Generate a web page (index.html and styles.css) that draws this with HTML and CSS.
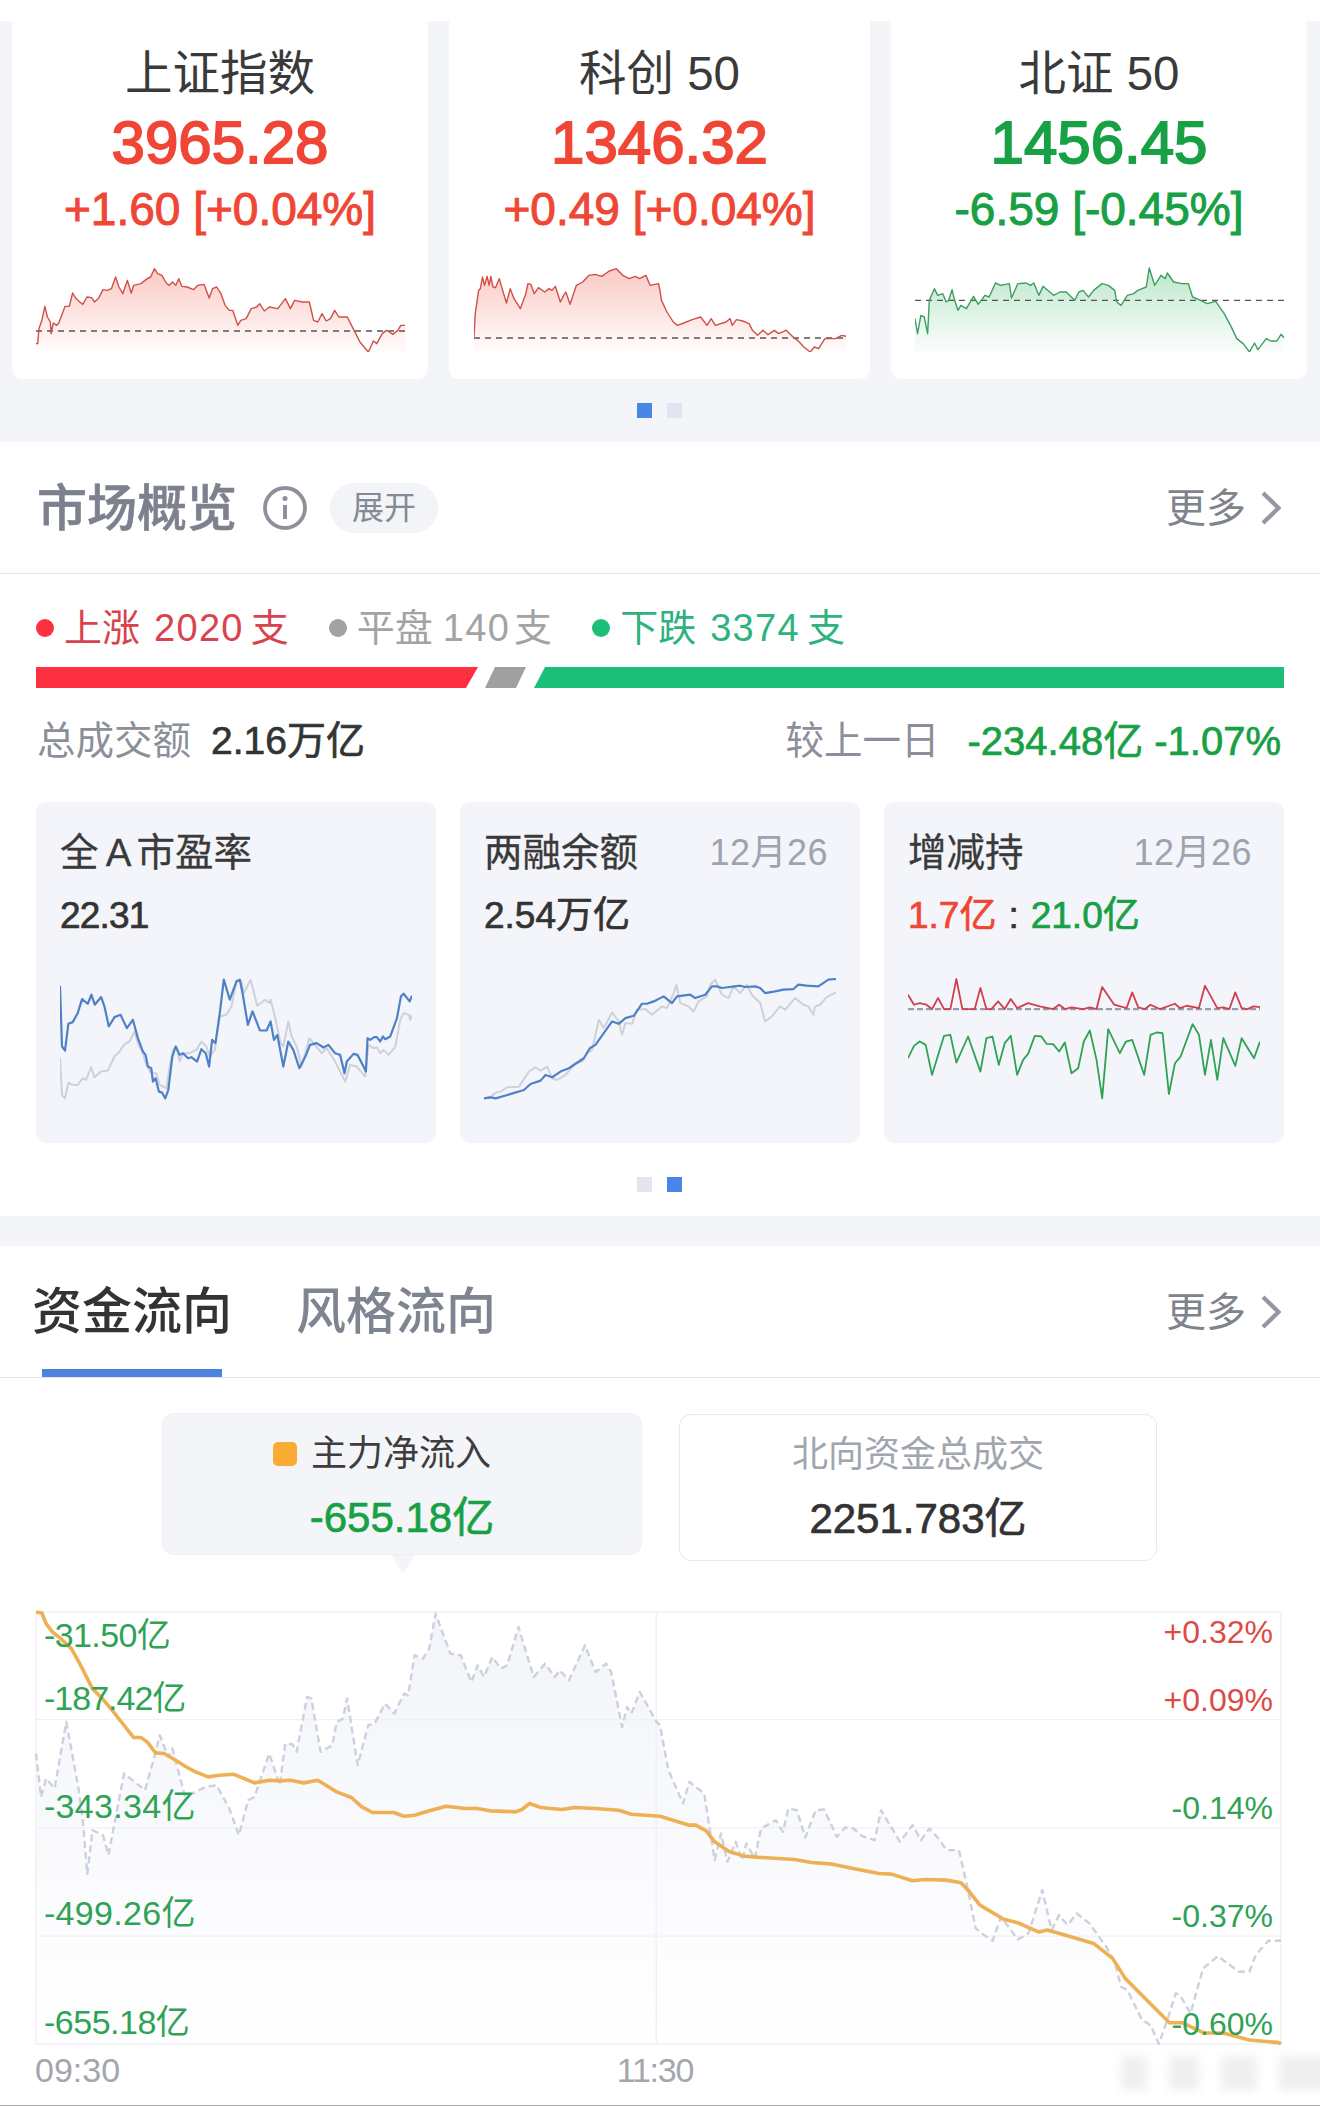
FILE: index.html
```html
<!DOCTYPE html>
<html lang="zh-CN">
<head>
<meta charset="utf-8">
<title>市场概览</title>
<link rel="stylesheet" href="styles.css">
</head>
<body>
<div class="page">
  <div class="top-strip"></div>
  <section class="indices">
    <div class="index-row">
      <article class="index-card narrow">
        <h3 class="index-name">上证指数</h3>
        <div class="index-price up">3965.28</div>
        <div class="index-change up">+1.60 [+0.04%]</div>
        <svg class="spark spark-narrow" viewBox="86 800 876 255" preserveAspectRatio="none">
          <defs>
            <linearGradient id="gr" x1="0" y1="0" x2="0" y2="1"><stop offset="0" stop-color="#f8a9a0" stop-opacity=".62"/><stop offset="1" stop-color="#f8a9a0" stop-opacity=".03"/></linearGradient>
            <linearGradient id="gg" x1="0" y1="0" x2="0" y2="1"><stop offset="0" stop-color="#7ccf97" stop-opacity=".5"/><stop offset="1" stop-color="#7ccf97" stop-opacity=".03"/></linearGradient>
            <linearGradient id="gb" x1="0" y1="0" x2="0" y2="1"><stop offset="0" stop-color="#eef0f7" stop-opacity=".7"/><stop offset="1" stop-color="#eef0f7" stop-opacity=".02"/></linearGradient>
          </defs>
          <polygon class="fill-red" points="86,1055 86,1030 90,1030 93,985 100,960 107,918 113,950 120,965 122,1000 127,968 135,975 140,968 150,935 155,918 165,918 173,878 180,893 190,905 197,912 207,890 218,892 225,905 235,893 245,868 255,870 265,865 275,830 283,860 292,880 303,840 312,878 318,855 335,850 350,835 358,830 367,805 375,820 385,825 395,848 402,855 410,845 418,855 425,835 432,858 445,860 460,868 470,855 485,852 497,893 505,865 515,860 525,880 535,915 545,930 553,930 565,975 572,960 585,955 597,925 610,920 617,910 628,932 640,920 660,925 678,895 690,925 700,900 718,905 735,905 745,960 755,965 765,940 775,962 785,955 795,930 805,950 825,950 835,975 845,1000 855,1025 875,1055 887,1022 895,1030 908,1000 918,990 925,995 933,1002 945,990 952,975 962,975 962,1055"/>
          <line class="base" x1="86" y1="992" x2="962" y2="992"/>
          <polyline class="line-red" points="86,1030 90,1030 93,985 100,960 107,918 113,950 120,965 122,1000 127,968 135,975 140,968 150,935 155,918 165,918 173,878 180,893 190,905 197,912 207,890 218,892 225,905 235,893 245,868 255,870 265,865 275,830 283,860 292,880 303,840 312,878 318,855 335,850 350,835 358,830 367,805 375,820 385,825 395,848 402,855 410,845 418,855 425,835 432,858 445,860 460,868 470,855 485,852 497,893 505,865 515,860 525,880 535,915 545,930 553,930 565,975 572,960 585,955 597,925 610,920 617,910 628,932 640,920 660,925 678,895 690,925 700,900 718,905 735,905 745,960 755,965 765,940 775,962 785,955 795,930 805,950 825,950 835,975 845,1000 855,1025 875,1055 887,1022 895,1030 908,1000 918,990 925,995 933,1002 945,990 952,975 962,975"/>
        </svg>
      </article>
      <article class="index-card wide">
        <h3 class="index-name">科创 50</h3>
        <div class="index-price up">1346.32</div>
        <div class="index-change up">+0.49 [+0.04%]</div>
        <svg class="spark spark-wide" viewBox="1127 800 883 255" preserveAspectRatio="none">
          <polygon class="fill-red" points="1127,1055 1127,1010 1130,940 1138,870 1142,865 1147,830 1152,855 1158,828 1163,855 1167,828 1172,860 1178,862 1187,835 1195,870 1204,908 1213,865 1222,895 1237,925 1250,880 1255,850 1262,852 1270,880 1280,862 1295,875 1305,865 1312,870 1320,858 1332,905 1340,885 1345,875 1355,912 1370,855 1385,845 1400,825 1415,822 1430,828 1448,812 1465,805 1480,825 1495,835 1510,828 1520,835 1535,825 1545,855 1565,850 1568,868 1572,900 1585,935 1600,965 1610,975 1625,968 1645,958 1665,950 1680,975 1690,955 1700,975 1725,965 1735,955 1740,975 1750,958 1765,962 1780,970 1788,990 1800,1005 1813,990 1825,1003 1840,990 1850,1000 1868,990 1880,1005 1895,1020 1910,1040 1925,1055 1935,1040 1945,1045 1960,1015 1975,1015 1985,1015 2000,1005 2010,1008 2010,1055"/>
          <line class="base" x1="1127" y1="1013" x2="2010" y2="1013"/>
          <polyline class="line-red" points="1127,1010 1130,940 1138,870 1142,865 1147,830 1152,855 1158,828 1163,855 1167,828 1172,860 1178,862 1187,835 1195,870 1204,908 1213,865 1222,895 1237,925 1250,880 1255,850 1262,852 1270,880 1280,862 1295,875 1305,865 1312,870 1320,858 1332,905 1340,885 1345,875 1355,912 1370,855 1385,845 1400,825 1415,822 1430,828 1448,812 1465,805 1480,825 1495,835 1510,828 1520,835 1535,825 1545,855 1565,850 1568,868 1572,900 1585,935 1600,965 1610,975 1625,968 1645,958 1665,950 1680,975 1690,955 1700,975 1725,965 1735,955 1740,975 1750,958 1765,962 1780,970 1788,990 1800,1005 1813,990 1825,1003 1840,990 1850,1000 1868,990 1880,1005 1895,1020 1910,1040 1925,1055 1935,1040 1945,1045 1960,1015 1975,1015 1985,1015 2000,1005 2010,1008"/>
        </svg>
      </article>
      <article class="index-card narrow">
        <h3 class="index-name">北证 50</h3>
        <div class="index-price down">1456.45</div>
        <div class="index-change down">-6.59 [-0.45%]</div>
        <svg class="spark spark-narrow" viewBox="606 800 876 255" preserveAspectRatio="none">
          <polygon class="fill-green" points="606,1055 606,955 612,1000 620,945 628,950 636,1000 640,900 652,865 660,885 672,880 680,905 686,900 694,868 700,900 708,930 715,915 728,925 745,888 756,912 772,885 782,890 797,848 810,855 830,850 835,893 850,850 870,848 880,855 888,848 900,885 910,858 935,885 950,875 965,875 985,900 995,875 1005,870 1018,890 1030,870 1050,850 1065,855 1080,870 1085,905 1095,915 1110,885 1125,880 1135,870 1155,860 1162,803 1175,855 1190,825 1200,835 1205,818 1220,845 1240,850 1255,850 1265,890 1275,895 1300,910 1320,903 1340,940 1355,975 1370,1015 1385,1030 1400,1055 1412,1028 1420,1048 1440,1015 1450,1022 1465,1022 1475,1002 1482,1012 1482,1055"/>
          <line class="base" x1="606" y1="900" x2="1482" y2="900"/>
          <polyline class="line-green" points="606,955 612,1000 620,945 628,950 636,1000 640,900 652,865 660,885 672,880 680,905 686,900 694,868 700,900 708,930 715,915 728,925 745,888 756,912 772,885 782,890 797,848 810,855 830,850 835,893 850,850 870,848 880,855 888,848 900,885 910,858 935,885 950,875 965,875 985,900 995,875 1005,870 1018,890 1030,870 1050,850 1065,855 1080,870 1085,905 1095,915 1110,885 1125,880 1135,870 1155,860 1162,803 1175,855 1190,825 1200,835 1205,818 1220,845 1240,850 1255,850 1265,890 1275,895 1300,910 1320,903 1340,940 1355,975 1370,1015 1385,1030 1400,1055 1412,1028 1420,1048 1440,1015 1450,1022 1465,1022 1475,1002 1482,1012"/>
        </svg>
      </article>
    </div>
    <div class="pager pager-top"><span class="pager-dot active"></span><span class="pager-dot"></span></div>
  </section>

  <section class="overview">
    <header class="section-head">
      <h2 class="section-title">市场概览</h2>
      <svg class="info-icon" viewBox="0 0 44 44"><circle cx="22" cy="22" r="20" fill="none" stroke="#8d919c" stroke-width="3.8"/><circle cx="22" cy="12.5" r="2.5" fill="#8d919c"/><line x1="22" y1="19" x2="22" y2="33" stroke="#8d919c" stroke-width="4"/></svg>
      <span class="pill">展开</span>
      <a class="more"><span>更多</span><svg class="chevron" viewBox="0 0 20 34"><polyline points="2,2 17.5,17 2,32" fill="none" stroke="#94979f" stroke-width="4.2"/></svg></a>
    </header>
    <div class="legend">
      <span class="legend-item up-soft"><i class="dot dot-up"></i>上涨<span class="num">2020</span>支</span>
      <span class="legend-item flat-soft"><i class="dot dot-flat"></i>平盘<span class="num">140</span>支</span>
      <span class="legend-item down-soft"><i class="dot dot-down"></i>下跌<span class="num">3374</span>支</span>
    </div>
    <div class="breadth">
      <div class="seg seg-up"></div>
      <div class="seg seg-flat"></div>
      <div class="seg seg-down"></div>
    </div>
    <div class="totals">
      <div class="totals-group"><span class="totals-label">总成交额</span><span class="totals-value">2.16万亿</span></div>
      <div class="totals-group compare"><span class="totals-label">较上一日</span><span class="totals-value down">-234.48亿 -1.07%</span></div>
    </div>
    <div class="metric-row">
      <article class="metric">
        <div class="metric-head"><span class="metric-name tight">全 A 市盈率</span></div>
        <div class="metric-value narrow-digits">22.31</div>
        <svg class="metric-chart" viewBox="122 595 1053 365" preserveAspectRatio="none">
          <polyline class="line-soft" points="122,835 128,945 137,955 147,908 160,915 175,915 190,895 200,900 215,862 225,892 245,875 265,872 285,830 300,815 315,793 330,785 345,755 355,790 370,820 380,855 395,880 410,880 420,915 440,925 450,860 460,810 470,800 480,845 490,820 510,820 530,810 545,785 560,800 570,830 585,810 600,710 620,705 635,680 650,605 665,605 672,640 692,600 700,630 712,678 735,660 748,670 752,660 765,710 782,790 790,800 805,725 815,770 830,800 845,860 868,775 880,790 905,820 920,805 945,845 975,905 990,855 1010,860 1035,890 1045,795 1060,805 1070,802 1080,820 1090,810 1105,825 1125,800 1140,720 1150,700 1165,705 1170,720 1175,705"/>
          <polyline class="line-blue" points="122,618 128,800 137,812 147,732 160,727 175,700 188,658 205,672 216,645 226,675 245,652 255,680 268,740 285,712 303,705 322,745 340,720 355,775 370,815 378,825 385,860 395,865 400,905 408,895 418,935 427,938 437,955 446,930 458,830 468,800 480,825 490,820 505,835 515,832 532,845 545,808 558,820 568,860 577,780 587,790 600,700 612,600 630,660 650,605 660,600 668,640 684,735 698,695 720,752 740,752 752,725 762,780 772,765 790,860 805,785 820,810 838,865 856,830 870,795 890,790 910,803 925,795 945,820 960,825 973,880 980,845 1000,822 1012,825 1030,860 1037,875 1042,775 1050,780 1062,772 1070,772 1080,785 1088,770 1095,778 1110,770 1130,715 1142,650 1150,642 1168,665 1175,648"/>
        </svg>
      </article>
      <article class="metric">
        <div class="metric-head"><span class="metric-name">两融余额</span><span class="metric-date">12月26</span></div>
        <div class="metric-value">2.54万亿</div>
        <svg class="metric-chart" viewBox="100 595 1058 365" preserveAspectRatio="none">
          <polyline class="line-soft" points="100,955 120,950 135,938 150,935 170,922 205,920 235,875 255,862 270,872 290,860 305,895 320,900 345,885 375,850 395,845 410,820 425,810 445,720 460,745 485,698 505,725 515,765 525,730 545,732 560,690 585,688 605,705 635,680 650,685 670,640 678,615 690,670 715,680 730,695 745,665 770,650 780,615 795,600 815,645 835,655 850,620 870,640 890,615 905,645 930,670 945,725 965,710 990,680 1005,690 1035,655 1060,675 1075,680 1090,705 1095,680 1110,675 1130,652 1158,638"/>
          <polyline class="line-blue" points="100,955 120,952 135,955 170,945 220,930 240,912 270,902 285,885 305,892 330,875 355,865 400,835 418,805 435,795 460,760 485,725 505,732 525,715 550,708 575,672 590,672 610,665 640,650 665,670 680,650 720,645 735,655 765,645 785,620 800,620 815,625 870,618 885,622 915,620 930,625 945,640 975,635 1000,630 1030,628 1045,615 1070,618 1105,620 1135,600 1158,598"/>
        </svg>
      </article>
      <article class="metric">
        <div class="metric-head"><span class="metric-name">增减持</span><span class="metric-date">12月26</span></div>
        <div class="metric-value"><span class="up">1.7亿</span><span class="ratio">:</span><span class="down">21.0亿</span></div>
        <svg class="metric-chart" viewBox="85 595 1055 365" preserveAspectRatio="none">
          <line class="base-thick" x1="85" y1="688" x2="1140" y2="688"/>
          <polyline class="line-crimson" points="85,645 103,675 120,670 140,675 157,688 175,655 193,688 212,688 230,598 248,688 285,688 302,625 320,688 335,688 355,665 375,688 393,658 412,685 445,670 480,680 520,688 538,675 555,688 575,683 610,688 630,683 650,688 667,622 703,675 740,685 757,638 775,683 795,688 812,675 840,688 885,672 900,685 920,678 957,685 975,618 1012,685 1030,683 1048,688 1066,638 1085,685 1103,688 1120,680 1140,682"/>
          <polyline class="line-green-thick" points="85,835 103,798 120,785 138,795 157,885 193,768 212,765 230,848 265,770 302,875 320,775 338,770 357,855 375,790 393,768 412,885 430,840 445,822 465,768 485,770 500,792 520,793 538,815 555,788 575,880 595,865 612,785 630,752 650,840 667,955 685,748 720,820 738,785 757,780 793,885 812,765 830,758 848,760 867,942 885,850 902,830 938,733 957,765 975,885 993,780 1012,900 1030,775 1066,858 1085,775 1122,835 1140,785"/>
        </svg>
      </article>
    </div>
    <div class="pager pager-mid"><span class="pager-dot"></span><span class="pager-dot active"></span></div>
  </section>

  <div class="band"></div>

  <section class="flow">
    <header class="tabs">
      <h2 class="tab active">资金流向</h2>
      <h2 class="tab">风格流向</h2>
      <a class="more"><span>更多</span><svg class="chevron" viewBox="0 0 20 34"><polyline points="2,2 17.5,17 2,32" fill="none" stroke="#94979f" stroke-width="4.2"/></svg></a>
    </header>
    <div class="flow-boxes">
      <div class="flow-box selected">
        <div class="flow-label"><i class="swatch"></i>主力净流入</div>
        <div class="flow-value down">-655.18亿</div>
      </div>
      <div class="flow-box plain">
        <div class="flow-label muted">北向资金总成交</div>
        <div class="flow-value">2251.783亿</div>
      </div>
    </div>
    <div class="flow-chart">
      <svg class="flow-svg" viewBox="86 35 2957 1297" preserveAspectRatio="none">
        <rect class="grid" x="86" y="35" width="2957" height="1297"/>
        <line class="grid" x1="86" y1="358" x2="3043" y2="358"/>
        <line class="grid" x1="86" y1="683" x2="3043" y2="683"/>
        <line class="grid" x1="86" y1="1008" x2="3043" y2="1008"/>
        <line class="grid" x1="1559" y1="35" x2="1559" y2="1332"/>
        <polygon class="fill-blue" points="86,1332 86,460 98,590 110,535 130,565 158,365 187,565 197,660 208,822 220,690 245,705 258,765 295,520 320,545 345,570 365,480 380,405 400,470 410,445 440,590 490,560 515,555 545,625 568,705 590,600 605,590 640,460 665,555 678,430 695,432 705,455 730,290 740,295 762,455 790,435 800,365 815,355 825,295 850,495 875,375 890,370 915,310 937,340 960,280 970,285 985,165 1005,175 1020,145 1035,40 1070,160 1095,165 1120,245 1135,195 1150,230 1170,170 1190,205 1205,195 1232,80 1250,155 1268,230 1295,190 1318,230 1330,210 1352,240 1390,135 1415,215 1440,190 1452,215 1478,380 1490,320 1500,340 1520,275 1560,365 1568,375 1588,510 1623,610 1638,545 1673,580 1698,780 1713,700 1728,785 1748,725 1763,780 1773,730 1793,775 1808,685 1843,660 1860,695 1873,625 1893,630 1913,712 1938,630 1958,628 1988,710 2008,682 2028,685 2048,708 2078,720 2093,630 2138,725 2168,675 2188,720 2208,685 2233,720 2248,750 2278,750 2298,860 2318,985 2338,1005 2358,1022 2378,950 2418,1018 2443,1000 2476,870 2498,990 2516,945 2536,975 2558,940 2588,970 2628,1040 2648,1085 2663,1160 2678,1170 2713,1260 2733,1275 2753,1332"/>
        <polyline class="line-dash" points="86,460 98,590 110,535 130,565 158,365 187,565 197,660 208,822 220,690 245,705 258,765 295,520 320,545 345,570 365,480 380,405 400,470 410,445 440,590 490,560 515,555 545,625 568,705 590,600 605,590 640,460 665,555 678,430 695,432 705,455 730,290 740,295 762,455 790,435 800,365 815,355 825,295 850,495 875,375 890,370 915,310 937,340 960,280 970,285 985,165 1005,175 1020,145 1035,40 1070,160 1095,165 1120,245 1135,195 1150,230 1170,170 1190,205 1205,195 1232,80 1250,155 1268,230 1295,190 1318,230 1330,210 1352,240 1390,135 1415,215 1440,190 1452,215 1478,380 1490,320 1500,340 1520,275 1560,365 1568,375 1588,510 1623,610 1638,545 1673,580 1698,780 1713,700 1728,785 1748,725 1763,780 1773,730 1793,775 1808,685 1843,660 1860,695 1873,625 1893,630 1913,712 1938,630 1958,628 1988,710 2008,682 2028,685 2048,708 2078,720 2093,630 2138,725 2168,675 2188,720 2208,685 2233,720 2248,750 2278,750 2298,860 2318,985 2338,1005 2358,1022 2378,950 2418,1018 2443,1000 2476,870 2498,990 2516,945 2536,975 2558,940 2588,970 2628,1040 2648,1085 2663,1160 2678,1170 2713,1260 2733,1275 2753,1332 2773,1260 2793,1180 2803,1185 2828,1240 2858,1105 2893,1068 2943,1115 2968,1115 2983,1065 3013,1022 3043,1022"/>
        <polyline class="line-orange" points="86,35 100,38 110,70 125,95 145,115 170,145 190,190 220,265 240,290 270,335 295,375 318,412 335,412 350,425 370,458 390,460 415,478 440,498 465,515 495,530 520,525 555,522 580,535 605,548 640,540 665,542 690,540 722,548 755,540 775,555 800,575 835,592 860,620 885,637 935,637 960,648 985,645 1020,632 1060,618 1105,625 1130,624 1165,632 1225,635 1240,628 1258,610 1285,622 1335,628 1365,622 1415,625 1470,630 1500,642 1568,648 1638,675 1653,675 1678,692 1698,725 1733,755 1768,768 1808,772 1888,778 1928,787 1978,792 2018,803 2088,820 2118,822 2168,842 2198,838 2248,840 2283,848 2303,875 2328,915 2368,945 2383,957 2418,968 2468,996 2488,990 2558,1015 2598,1030 2643,1075 2673,1135 2728,1205 2778,1268 2808,1268 2858,1298 2908,1300 2968,1320 3038,1328 3043,1332"/>
      </svg>
      <span class="tick left t1">-31.50亿</span>
      <span class="tick left t2">-187.42亿</span>
      <span class="tick left t3">-343.34亿</span>
      <span class="tick left t4">-499.26亿</span>
      <span class="tick left t5">-655.18亿</span>
      <span class="tick right r1 pos">+0.32%</span>
      <span class="tick right r2 pos">+0.09%</span>
      <span class="tick right r3">-0.14%</span>
      <span class="tick right r4">-0.37%</span>
      <span class="tick right r5">-0.60%</span>
    </div>
    <div class="time-axis"><span>09:30</span><span class="time-mid">11:30</span><span></span></div>
  </section>
  <div class="watermark"><i class="wm w1"></i><i class="wm w2"></i><i class="wm w3"></i><i class="wm w4"></i></div>
  <div class="bottom-line"></div>
</div>
</body>
</html>
```

FILE: styles.css
```css
* { box-sizing: border-box; margin: 0; padding: 0; }
html, body { background: #fff; }
body { font-family: "Liberation Sans", "Noto Sans CJK SC", sans-serif; color: #333; }
h2, h3 { font-weight: 400; }
i { display: block; }
.page { position: relative; width: 1320px; height: 2106px; overflow: hidden; background: #fff; }
.up { color: #f04635; }
.down { color: #18a045; }

.top-strip { height: 21px; }
.indices { height: 421px; background: #f4f5f9; }
.index-row { display: flex; gap: 21px; padding-left: 12px; height: 358px; }
.index-card { display: flex; flex-direction: column; align-items: center; background: #fff; border-radius: 0 0 10px 10px; padding-top: 27px; }
.narrow { width: 416px; }
.wide { width: 421px; }
.index-name { font-size: 47.5px; line-height: 52px; color: #3a3a3a; }
.index-price { margin-top: 13px; font-size: 60px; line-height: 60px; -webkit-text-stroke: 1.8px currentColor; }
.index-change { margin-top: 11px; font-size: 46px; line-height: 50px; -webkit-text-stroke: 1px currentColor; }
.spark { display: block; margin-top: 33px; height: 85px; }
.spark-narrow { width: 369px; }
.spark-wide { width: 372px; }
.fill-red { fill: url(#gr); }
.fill-green { fill: url(#gg); }
.fill-blue { fill: url(#gb); }
.base { stroke: #555; stroke-width: 1.4; stroke-dasharray: 6 5; vector-effect: non-scaling-stroke; }
.line-red, .line-green, .line-blue, .line-soft, .line-crimson, .line-green-thick, .line-orange, .line-dash { fill: none; vector-effect: non-scaling-stroke; stroke-linejoin: round; }
.line-red { stroke: #cf5048; stroke-width: 1.4; }
.line-green { stroke: #3d9e62; stroke-width: 1.4; }

.pager { display: flex; justify-content: flex-start; gap: 15px; padding-left: 637px; }
.pager-top { margin-top: 24px; }
.pager-mid { margin-top: 34px; }
.pager-dot { display: block; width: 15px; height: 15px; background: #e2e5f0; }
.pager-dot.active { background: #4a86e8; }

.overview { height: 774px; }
.section-head { position: relative; display: flex; align-items: center; height: 132px; padding: 0 39px 0 37px; border-bottom: 1px solid #e6e6ea; }
.section-title { padding-top: 3px; font-size: 50px; line-height: 60px; font-weight: 500; color: #7d818e; -webkit-text-stroke: .6px currentColor; }
.info-icon { display: block; width: 44px; height: 44px; margin-left: 26px; }
.pill { margin-left: 23px; width: 108px; height: 50px; border-radius: 25px; background: #f3f4f8; color: #858994; font-size: 32px; line-height: 50px; text-align: center; }
.more { display: flex; align-items: center; margin-left: auto; color: #7f838d; font-size: 40px; line-height: 50px; }
.chevron { display: block; width: 20px; height: 34px; margin-left: 15px; }

.legend { display: flex; gap: 40px; height: 50px; margin-top: 29px; padding-left: 36px; align-items: center; }
.legend-item { display: flex; align-items: center; font-size: 38px; line-height: 50px; white-space: pre; }
.num { margin: 0 7px 0 14px; letter-spacing: 1.3px; }
.flat-soft .num { margin: 0 4px 0 10px; }
.dot { width: 18px; height: 18px; border-radius: 50%; margin-right: 10px; }
.dot-up { background: #fc3041; }
.dot-flat { background: #a2a2a2; }
.dot-down { background: #1dbf78; }
.up-soft { color: #d8434d; }
.flat-soft { color: #a3a3a3; }
.down-soft { color: #2fb27d; }

.breadth { display: flex; margin: 14px 36px 0; height: 21px; }
.seg { height: 21px; }
.seg-up { width: 442px; background: #fc3041; clip-path: polygon(0 0, 100% 0, calc(100% - 12px) 100%, 0 100%); }
.seg-flat { width: 41px; margin-left: 7px; background: #a0a0a0; clip-path: polygon(10px 0, 100% 0, calc(100% - 10px) 100%, 0 100%); }
.seg-down { width: 750px; margin-left: 8px; background: #1dbf78; clip-path: polygon(11px 0, 100% 0, 100% 100%, 0 100%); }

.totals { display: flex; justify-content: space-between; margin-top: 28px; padding: 0 39px 0 37px; height: 50px; align-items: center; }
.totals-group { display: flex; gap: 20px; align-items: center; }
.totals-group.compare { gap: 28px; }
.totals-label { font-size: 38.5px; line-height: 50px; color: #8b8f99; }
.totals-value { font-size: 39px; line-height: 50px; -webkit-text-stroke: .7px currentColor; }
.compare .totals-value { font-size: 40px; }

.metric-row { display: flex; gap: 24px; margin-top: 36px; padding-left: 36px; }
.metric { width: 400px; height: 341px; padding: 26px 24px 0; border-radius: 10px; background: #f3f5fa; }
.metric-head { display: flex; justify-content: space-between; align-items: center; height: 50px; padding-right: 8px; }
.metric-name { font-size: 38.5px; line-height: 50px; color: #3a3a3a; -webkit-text-stroke: .3px currentColor; }
.metric-name.tight { word-spacing: -3.5px; }
.metric-date { font-size: 36px; line-height: 50px; letter-spacing: .5px; color: #9ea3af; }
.metric-value { margin-top: 13px; font-size: 37px; line-height: 50px; color: #333; -webkit-text-stroke: .7px currentColor; }
.narrow-digits { letter-spacing: -.8px; }
.ratio { margin: 0 12px; }
.metric-chart { display: block; width: 352px; height: 122px; margin-top: 37px; }
.line-blue { stroke: #4f81c7; stroke-width: 2.2; }
.line-soft { stroke: #cfd1da; stroke-width: 2; }
.line-crimson { stroke: #d0404f; stroke-width: 1.8; }
.line-green-thick { stroke: #2fa353; stroke-width: 1.8; }
.base-thick { stroke: #9a9bab; stroke-width: 2.4; stroke-dasharray: 6 3; vector-effect: non-scaling-stroke; }

.band { height: 30px; background: #f4f5f9; }

.tabs { display: flex; align-items: stretch; height: 132px; padding: 0 39px 0 32px; border-bottom: 1px solid #e6e6ea; }
.tab { position: relative; font-size: 50px; line-height: 133px; font-weight: 500; color: #7f8491; margin-right: 64px; }
.tab.active { color: #333; }
.tab.active::after { content: ""; position: absolute; left: 10px; bottom: 0; width: 180px; height: 8px; background: #4e82e0; }

.flow-boxes { display: flex; align-items: flex-start; gap: 37px; padding: 35px 0 0 162px; height: 183px; }
.flow-box { position: relative; padding-top: 18px; text-align: center; border-radius: 12px; }
.selected { width: 480px; height: 142px; background: #f4f5f9; border: 1px solid #eeeff3; }
.selected::after { content: ""; position: absolute; left: 228px; top: 141px; border-left: 12px solid transparent; border-right: 12px solid transparent; border-top: 19px solid #f4f5f9; }
.plain { width: 478px; height: 147px; margin-top: 1px; border: 1px solid #e8e8ec; }
.flow-label { display: flex; justify-content: center; align-items: center; font-size: 36px; line-height: 44px; color: #3d3d3d; }
.selected .flow-label { padding-right: 40px; }
.flow-label.muted { color: #a1a5af; }
.swatch { width: 24px; height: 24px; margin-right: 14px; border-radius: 5px; background: #f9ab33; }
.flow-value { margin-top: 17px; font-size: 42px; line-height: 50px; -webkit-text-stroke: .7px currentColor; }

.flow-chart { position: relative; width: 1245px; height: 432px; margin: 51px 0 0 36px; }
.flow-svg { display: block; width: 1245px; height: 432px; overflow: visible; }
.grid { fill: none; stroke: #f1f1f4; stroke-width: 1.4; vector-effect: non-scaling-stroke; }
.line-dash { stroke: #cdd0de; stroke-width: 2.4; stroke-dasharray: 7 4; }
.line-orange { stroke: #edb054; stroke-width: 3.6; }
.tick { position: absolute; font-size: 32px; line-height: 36px; color: #2fa256; white-space: nowrap; }
.tick.pos { color: #dd4b45; }
.left { left: 8px; font-size: 34px; }
.right { right: 8px; }
.t1 { top: 5px; letter-spacing: -.6px; }
.t2 { top: 68px; letter-spacing: -1px; }
.t3 { top: 176px; letter-spacing: .3px; }
.t4 { top: 283px; letter-spacing: .3px; }
.t5 { top: 392px; letter-spacing: -.5px; }
.r1 { top: 2px; }
.r2 { top: 70px; }
.r3 { top: 178px; }
.r4 { top: 286px; }
.r5 { top: 394px; }

.time-axis { display: grid; grid-template-columns: 1fr auto 1fr; width: 1240px; margin: 6px 0 0 35px; font-size: 34px; line-height: 40px; color: #a3a6ae; }
.time-mid { letter-spacing: -1.2px; }

.watermark { position: absolute; left: 1121px; top: 2056px; display: flex; gap: 22px; filter: blur(5px); }
.wm { height: 34px; background: #efefef; }
.w1 { width: 26px; }
.w2 { width: 30px; }
.w3 { width: 36px; }
.w4 { width: 52px; }
.bottom-line { position: absolute; left: 0; right: 0; bottom: 0; height: 1px; background: #a8a8a8; }
```
